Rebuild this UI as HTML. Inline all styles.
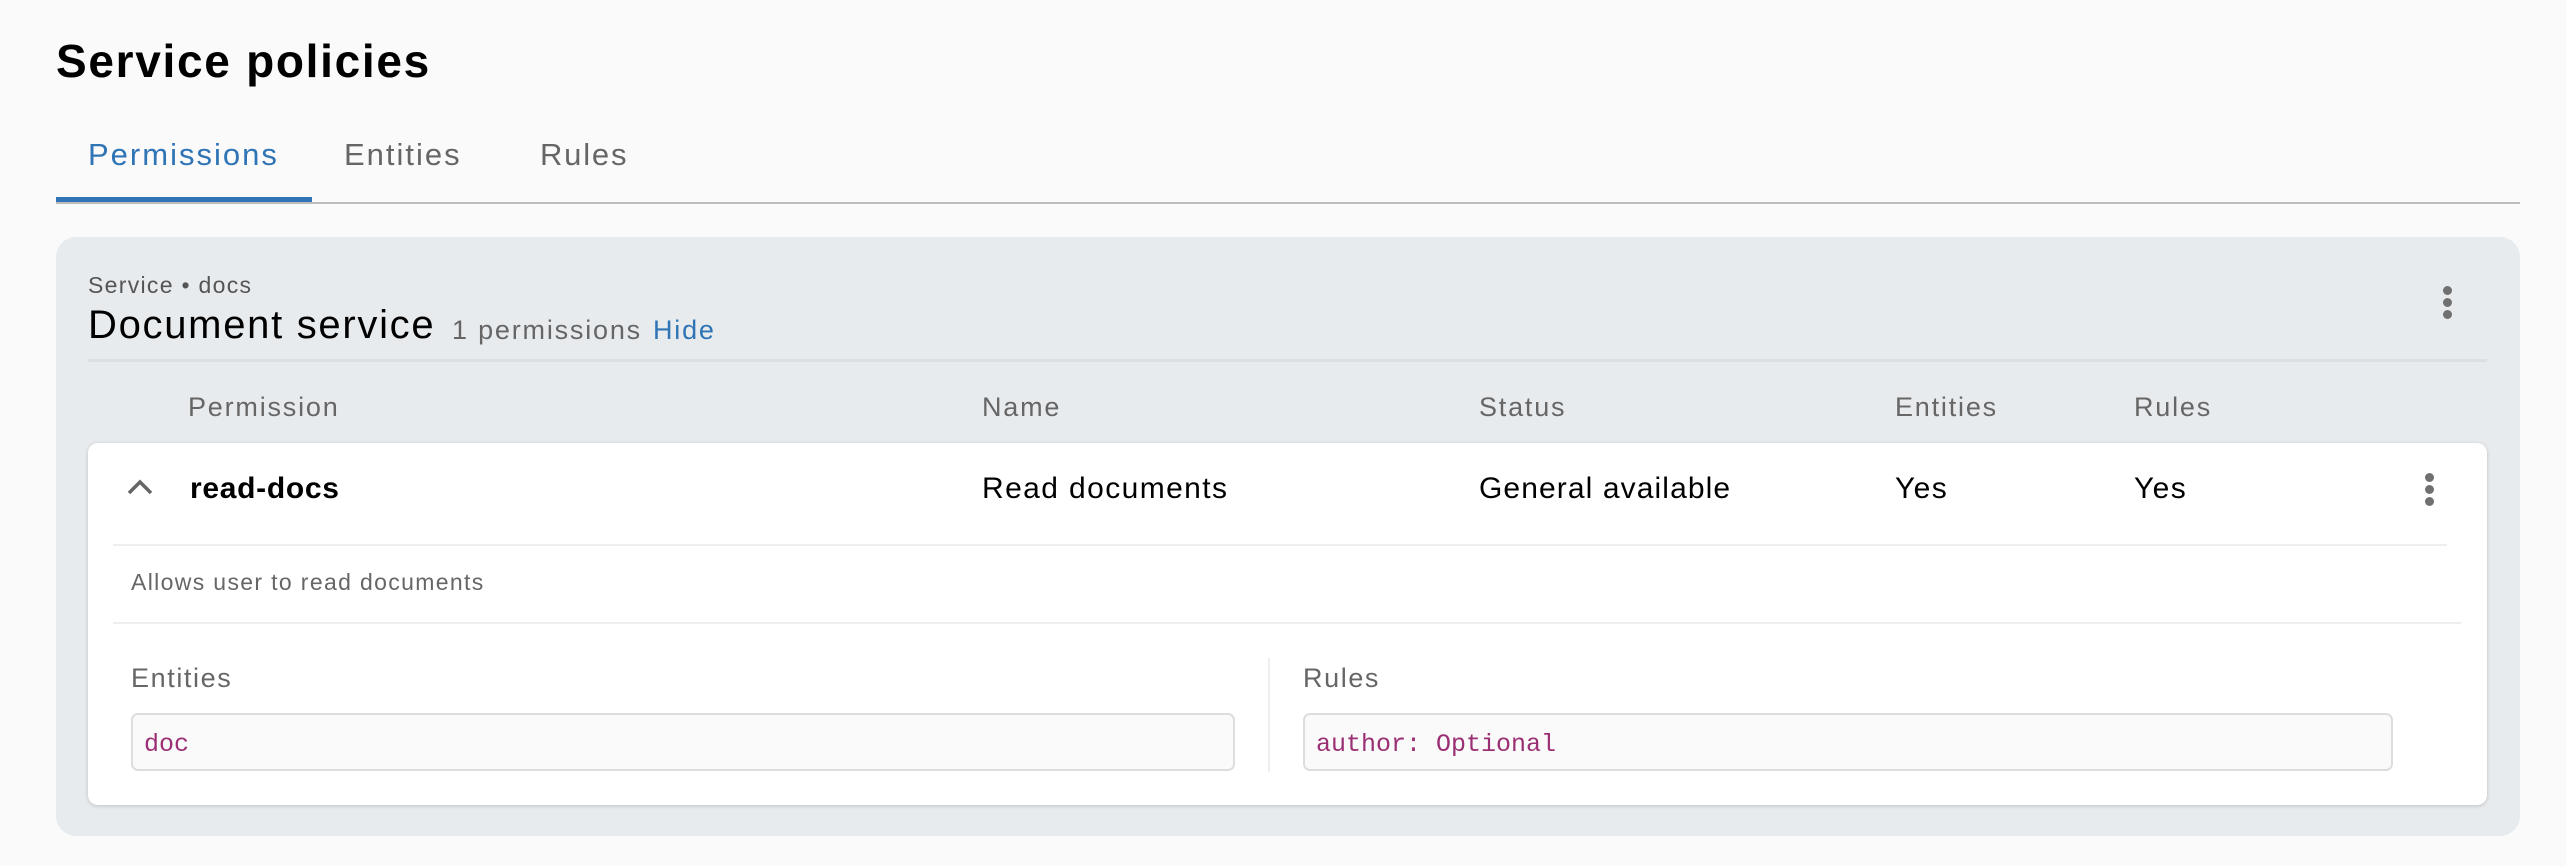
<!DOCTYPE html>
<html><head><meta charset="utf-8"><style>
*{margin:0;padding:0;box-sizing:border-box}
body{width:2566px;height:866px;background:#fafafa;font-family:"Liberation Sans",sans-serif;position:relative;overflow:hidden}
.a{position:absolute;white-space:nowrap;letter-spacing:1.6px}
.k{position:absolute;width:9px}
.k i{display:block;width:9px;height:9px;border-radius:50%;background:#707070;margin-bottom:3px}
</style></head><body>
<div class="a" style="left:56px;top:34px;font-size:46px;font-weight:bold;color:#000;letter-spacing:1.7px">Service policies</div>
<div class="a" style="left:88px;top:137px;font-size:31px;color:#2f74b5;letter-spacing:2px">Permissions</div>
<div class="a" style="left:344px;top:137px;font-size:31px;color:#666;letter-spacing:2px">Entities</div>
<div class="a" style="left:540px;top:137px;font-size:31px;color:#666;letter-spacing:1.8px">Rules</div>
<div class="a" style="left:56px;top:202px;width:2464px;height:2px;background:#bcbcbc"></div>
<div class="a" style="left:56px;top:197px;width:256px;height:5px;background:#2f74b5"></div>

<div class="a" style="left:56px;top:237px;width:2464px;height:599px;background:#e8ebee;border-radius:20px"></div>
<div class="a" style="left:88px;top:272px;font-size:23px;color:#555;letter-spacing:1.3px">Service • docs</div>
<div class="a" style="left:88px;top:303px;font-size:40px;color:#000;letter-spacing:1.7px">Document service</div>
<div class="a" style="left:452px;top:315px;font-size:27px;color:#666;letter-spacing:1.8px">1 permissions</div>
<div class="a" style="left:653px;top:315px;font-size:27px;color:#2f74b5;letter-spacing:1.8px">Hide</div>
<div class="k" style="left:2443px;top:286px"><i></i><i></i><i></i></div>
<div class="a" style="left:88px;top:359px;width:2399px;height:3px;background:#dcdfe2"></div>

<div class="a" style="left:188px;top:392px;font-size:27px;color:#666;letter-spacing:1.8px">Permission</div>
<div class="a" style="left:982px;top:392px;font-size:27px;color:#666;letter-spacing:1.8px">Name</div>
<div class="a" style="left:1479px;top:392px;font-size:27px;color:#666;letter-spacing:1.8px">Status</div>
<div class="a" style="left:1895px;top:392px;font-size:27px;color:#666;letter-spacing:1.8px">Entities</div>
<div class="a" style="left:2134px;top:392px;font-size:27px;color:#666;letter-spacing:1.8px">Rules</div>

<div class="a" style="left:88px;top:443px;width:2399px;height:362px;background:#fff;border-radius:10px;box-shadow:0 1px 4px rgba(0,0,0,.18)"></div>
<svg class="a" style="left:126px;top:478px" width="28" height="18" viewBox="0 0 28 18"><path d="M3 15 L14 4 L25 15" fill="none" stroke="#666" stroke-width="3.5"/></svg>
<div class="a" style="left:190px;top:472px;font-size:30px;font-weight:bold;color:#000;letter-spacing:0.7px">read-docs</div>
<div class="a" style="left:982px;top:472px;font-size:30px;color:#000;letter-spacing:1.4px">Read documents</div>
<div class="a" style="left:1479px;top:472px;font-size:30px;color:#000;letter-spacing:1.1px">General available</div>
<div class="a" style="left:1895px;top:472px;font-size:30px;color:#000;letter-spacing:1.4px">Yes</div>
<div class="a" style="left:2134px;top:472px;font-size:30px;color:#000;letter-spacing:1.4px">Yes</div>
<div class="k" style="left:2425px;top:473px"><i></i><i></i><i></i></div>
<div class="a" style="left:113px;top:544px;width:2334px;height:2px;background:#eeeeee"></div>
<div class="a" style="left:131px;top:569px;font-size:23px;color:#666;letter-spacing:1.35px">Allows user to read documents</div>
<div class="a" style="left:113px;top:622px;width:2348px;height:2px;background:#eeeeee"></div>
<div class="a" style="left:131px;top:663px;font-size:27px;color:#666;letter-spacing:1.6px">Entities</div>
<div class="a" style="left:1303px;top:663px;font-size:27px;color:#666;letter-spacing:1.6px">Rules</div>
<div class="a" style="left:1268px;top:658px;width:2px;height:114px;background:#eeeeee"></div>
<div class="a" style="left:131px;top:713px;width:1104px;height:58px;background:#fafafa;border:2px solid #ddd;border-radius:7px"></div>
<div class="a" style="left:1303px;top:713px;width:1090px;height:58px;background:#fafafa;border:2px solid #ddd;border-radius:7px"></div>
<div class="a" style="left:144px;top:730px;font-size:25px;font-family:'Liberation Mono',monospace;color:#9b2f74;letter-spacing:0">doc</div>
<div class="a" style="left:1316px;top:730px;font-size:25px;font-family:'Liberation Mono',monospace;color:#9b2f74;letter-spacing:0">author: Optional</div>
</body></html>
